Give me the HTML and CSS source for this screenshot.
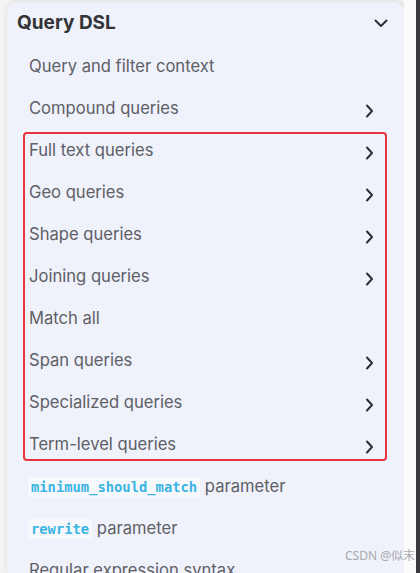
FILE: index.html
```html
<!DOCTYPE html>
<html>
<head>
<meta charset="utf-8">
<link rel="stylesheet" href="styles.css">
</head>
<body>
<div class="page">
  <div class="panel">
    <div class="title-row">
      <span class="title">Query DSL</span>
      <svg class="chev-down" width="14" height="9" viewBox="0 0 14 9"><path d="M1.5 1.5 L7 7 L12.5 1.5" fill="none" stroke="#2f3033" stroke-width="2" stroke-linecap="round" stroke-linejoin="round"/></svg>
    </div>
    <div class="row"><span>Query and filter context</span></div>
    <div class="row"><span>Compound queries</span><svg class="chev" width="9" height="14" viewBox="0 0 9 14"><path d="M2 1.5 L7 7 L2 12.5" fill="none" stroke="#2f3033" stroke-width="2" stroke-linecap="round" stroke-linejoin="round"/></svg></div>
    <div class="group">
      <div class="row"><span>Full text queries</span><svg class="chev" width="9" height="14" viewBox="0 0 9 14"><path d="M2 1.5 L7 7 L2 12.5" fill="none" stroke="#2f3033" stroke-width="2" stroke-linecap="round" stroke-linejoin="round"/></svg></div>
      <div class="row"><span>Geo queries</span><svg class="chev" width="9" height="14" viewBox="0 0 9 14"><path d="M2 1.5 L7 7 L2 12.5" fill="none" stroke="#2f3033" stroke-width="2" stroke-linecap="round" stroke-linejoin="round"/></svg></div>
      <div class="row"><span>Shape queries</span><svg class="chev" width="9" height="14" viewBox="0 0 9 14"><path d="M2 1.5 L7 7 L2 12.5" fill="none" stroke="#2f3033" stroke-width="2" stroke-linecap="round" stroke-linejoin="round"/></svg></div>
      <div class="row"><span>Joining queries</span><svg class="chev" width="9" height="14" viewBox="0 0 9 14"><path d="M2 1.5 L7 7 L2 12.5" fill="none" stroke="#2f3033" stroke-width="2" stroke-linecap="round" stroke-linejoin="round"/></svg></div>
      <div class="row"><span>Match all</span></div>
      <div class="row"><span>Span queries</span><svg class="chev" width="9" height="14" viewBox="0 0 9 14"><path d="M2 1.5 L7 7 L2 12.5" fill="none" stroke="#2f3033" stroke-width="2" stroke-linecap="round" stroke-linejoin="round"/></svg></div>
      <div class="row"><span>Specialized queries</span><svg class="chev" width="9" height="14" viewBox="0 0 9 14"><path d="M2 1.5 L7 7 L2 12.5" fill="none" stroke="#2f3033" stroke-width="2" stroke-linecap="round" stroke-linejoin="round"/></svg></div>
      <div class="row"><span>Term-level queries</span><svg class="chev" width="9" height="14" viewBox="0 0 9 14"><path d="M2 1.5 L7 7 L2 12.5" fill="none" stroke="#2f3033" stroke-width="2" stroke-linecap="round" stroke-linejoin="round"/></svg></div>
    </div>
    <div class="row"><span><code>minimum_should_match</code> parameter</span></div>
    <div class="row"><span><code>rewrite</code> parameter</span></div>
    <div class="row"><span>Regular expression syntax</span></div>
  </div>
  <div class="gutter"></div>
  <div class="edge"></div>
  <div class="watermark">CSDN @似末</div>
</div>
</body>
</html>
```
FILE: styles.css
```css
html, body {
  margin: 0;
  padding: 0;
}
body {
  width: 420px;
  height: 573px;
  overflow: hidden;
  background: #f3f3f4;
  font-family: Inter, "Noto Sans", sans-serif;
}
.page {
  position: relative;
  display: flex;
  height: 573px;
  padding-top: 2px;
  padding-left: 7px;
  box-sizing: border-box;
}
.panel {
  width: 397px;
  flex: none;
  background: #eff2fb;
  border-radius: 10px 10px 0 0;
  box-shadow: 1px 0 6px rgba(0,0,0,0.12);
  overflow: hidden;
}
.gutter {
  width: 12px;
  flex: none;
  background: #fbfbfb;
  margin-top: -2px;
}
.edge {
  width: 4px;
  flex: none;
  background: #3a3a3e;
  margin-top: -2px;
}
.title-row {
  height: 43px;
  display: flex;
  align-items: center;
  justify-content: space-between;
  padding: 0 16px 0 10px;
  box-sizing: border-box;
}
.title {
  font-weight: 700;
  font-size: 19px;
  color: #333438;
  margin-top: -3px;
}
.chev-down {
  margin-top: -1px;
}
.row {
  height: 42px;
  display: flex;
  align-items: center;
  justify-content: space-between;
  padding: 0 30px 0 22px;
  box-sizing: border-box;
  font-size: 16.6px;
  color: #5e6066;
}
.row span {
  margin-top: 0;
}
.chev {
  margin-top: 6px;
}
.group {
  position: relative;
}
.group::after {
  content: "";
  position: absolute;
  left: 16px;
  right: 17px;
  top: 3px;
  bottom: 4px;
  border: 2px solid #e8343c;
  border-radius: 4px;
  pointer-events: none;
}
code {
  font-family: "DejaVu Sans Mono", monospace;
  font-weight: 700;
  font-size: 13.8px;
  color: #39b4e3;
  background: #f6f8fc;
  padding: 2px 3px;
  margin-left: -1px;
}
.watermark {
  position: absolute;
  right: 5px;
  bottom: 9px;
  font-size: 12px;
  color: #a8a9ad;
  font-family: "Noto Sans", "Noto Sans CJK SC", sans-serif;
}
```
